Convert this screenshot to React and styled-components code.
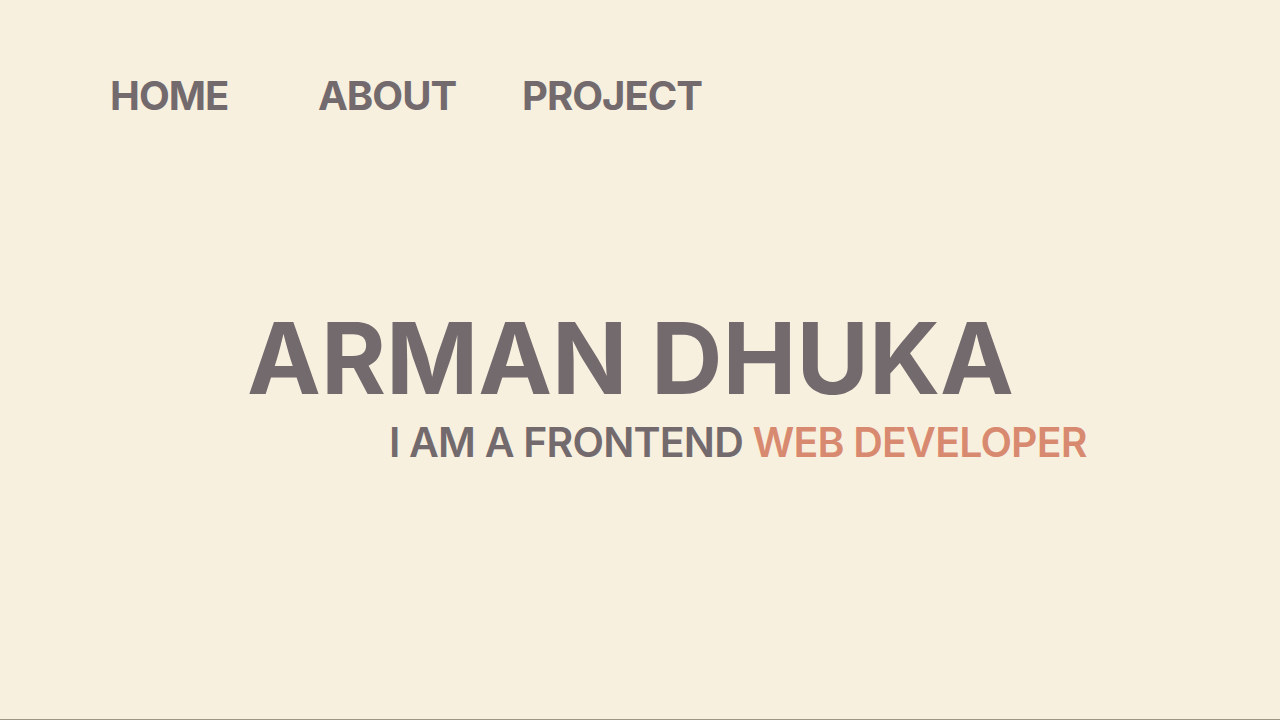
import React from 'react';
import styled, { createGlobalStyle } from 'styled-components';

const GlobalStyle = createGlobalStyle`
  * { box-sizing: border-box; }
  html, body {
    margin: 0;
    padding: 0;
    background: #f8f0df;
  }
  body {
    font-family: Inter, 'Noto Sans', sans-serif;
  }
`;

function App() {
  return (
    <>
      <GlobalStyle />
      <Page>
        <Nav>
          <NavLink href='#' $width={208}>HOME</NavLink>
          <NavLink href='#' $width={204}>ABOUT</NavLink>
          <NavLink href='#'>PROJECT</NavLink>
        </Nav>
        <Hero>
          <Name>ARMAN DHUKA</Name>
          <Tagline>
            I AM A FRONTEND <span>WEB DEVELOPER</span>
          </Tagline>
        </Hero>
      </Page>
    </>
  );
}

export default App;

const Page = styled.div`
  min-height: 720px;
  padding-top: 76px;
  background: #f8f0df;
  border-bottom: 1px solid #9b9784;
`;

const Nav = styled.nav`
  display: flex;
  align-items: center;
  padding-left: 110px;
`;

const NavLink = styled.a`
  width: ${(p) => (p.$width ? `${p.$width}px` : 'auto')};
  font-size: 40px;
  line-height: 1;
  font-weight: 700;
  color: #736a6e;
  text-decoration: none;
  letter-spacing: -1px;
`;

const Hero = styled.section`
  display: flex;
  flex-direction: column;
  align-items: flex-start;
  padding-left: 247px;
  margin-top: 193px;
`;

const Name = styled.h1`
  margin: 0;
  font-size: 99px;
  line-height: 1;
  font-weight: 700;
  color: #736a6e;
  letter-spacing: 0;
`;

const Tagline = styled.p`
  margin: 14px 0 0 142px;
  font-size: 41px;
  line-height: 1;
  font-weight: 600;
  color: #736a6e;
  white-space: nowrap;
  letter-spacing: -0.8px;

  span {
    color: #d88a70;
  }
`;
